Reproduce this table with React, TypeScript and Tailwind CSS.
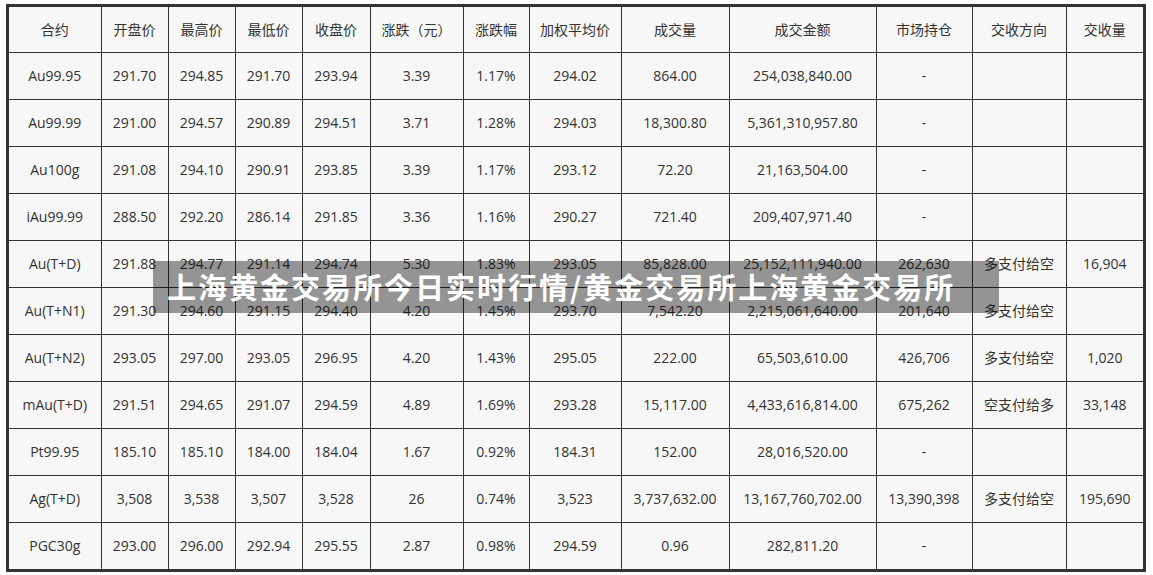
const headers = [
  "合约",
  "开盘价",
  "最高价",
  "最低价",
  "收盘价",
  "涨跌（元）",
  "涨跌幅",
  "加权平均价",
  "成交量",
  "成交金额",
  "市场持仓",
  "交收方向",
  "交收量",
];

const widths = [
  "w-[92px]",
  "w-[67px]",
  "w-[67px]",
  "w-[67px]",
  "w-[68px]",
  "w-[93px]",
  "w-[66px]",
  "w-[92px]",
  "w-[108px]",
  "w-[147px]",
  "w-[96px]",
  "w-[94px]",
  "w-[77px]",
];

const rows = [
  ["Au99.95", "291.70", "294.85", "291.70", "293.94", "3.39", "1.17%", "294.02", "864.00", "254,038,840.00", "-", "", ""],
  ["Au99.99", "291.00", "294.57", "290.89", "294.51", "3.71", "1.28%", "294.03", "18,300.80", "5,361,310,957.80", "-", "", ""],
  ["Au100g", "291.08", "294.10", "290.91", "293.85", "3.39", "1.17%", "293.12", "72.20", "21,163,504.00", "-", "", ""],
  ["iAu99.99", "288.50", "292.20", "286.14", "291.85", "3.36", "1.16%", "290.27", "721.40", "209,407,971.40", "-", "", ""],
  ["Au(T+D)", "291.88", "294.77", "291.14", "294.74", "5.30", "1.83%", "293.05", "85,828.00", "25,152,111,940.00", "262,630", "多支付给空", "16,904"],
  ["Au(T+N1)", "291.30", "294.60", "291.15", "294.40", "4.20", "1.45%", "293.70", "7,542.20", "2,215,061,640.00", "201,640", "多支付给空", ""],
  ["Au(T+N2)", "293.05", "297.00", "293.05", "296.95", "4.20", "1.43%", "295.05", "222.00", "65,503,610.00", "426,706", "多支付给空", "1,020"],
  ["mAu(T+D)", "291.51", "294.65", "291.07", "294.59", "4.89", "1.69%", "293.28", "15,117.00", "4,433,616,814.00", "675,262", "空支付给多", "33,148"],
  ["Pt99.95", "185.10", "185.10", "184.00", "184.04", "1.67", "0.92%", "184.31", "152.00", "28,016,520.00", "-", "", ""],
  ["Ag(T+D)", "3,508", "3,538", "3,507", "3,528", "26", "0.74%", "3,523", "3,737,632.00", "13,167,760,702.00", "13,390,398", "多支付给空", "195,690"],
  ["PGC30g", "293.00", "296.00", "292.94", "295.55", "2.87", "0.98%", "294.59", "0.96", "282,811.20", "-", "", ""],
];

export default function App() {
  return (
    <div className="relative h-[575px] w-[1153px] overflow-hidden bg-white pl-[6px] pt-[4px] font-['Open_Sans','Noto_Sans_CJK_SC',sans-serif] text-[14px] text-[#333]">
      <div className="w-[1140px] border-[3px] border-[#333] bg-[#f7f7f7]">
        <table className="w-full table-fixed border-collapse border-hidden">
          <colgroup>
            {widths.map((w, i) => (
              <col key={i} className={w} />
            ))}
          </colgroup>
          <thead>
            <tr className="h-[45px]">
              {headers.map((h) => (
                <th key={h} className="border border-[#333] p-0 text-center font-normal">
                  {h}
                </th>
              ))}
            </tr>
          </thead>
          <tbody>
            {rows.map((r) => (
              <tr key={r[0]} className="h-[47px]">
                {r.map((c, i) => (
                  <td key={i} className="border border-[#333] p-0 text-center whitespace-nowrap">
                    {c}
                  </td>
                ))}
              </tr>
            ))}
          </tbody>
        </table>
      </div>

      {/* watermark banner */}
      <div className="absolute left-[153px] top-[261px] flex h-[52px] w-[846px] items-center bg-black/40 pl-[14px]">
        <span className="font-['Noto_Sans_CJK_SC',sans-serif] text-[29px] font-bold tracking-[2px] text-white">
          上海黄金交易所今日实时行情/黄金交易所上海黄金交易所
        </span>
      </div>
    </div>
  );
}
